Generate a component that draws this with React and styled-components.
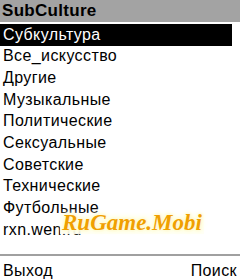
import styled, { createGlobalStyle } from "styled-components";

const GlobalStyle = createGlobalStyle`
  html, body {
    margin: 0;
    padding: 0;
    background: #fff;
  }
  body {
    font-family: "Liberation Sans", Arial, sans-serif;
  }
`;

const Screen = styled.div`
  width: 240px;
  height: 280px;
  display: flex;
  flex-direction: column;
  background: #fff;
  overflow: hidden;
`;

const TitleBar = styled.div`
  height: 22px;
  flex-shrink: 0;
  background: #a3a3a3;
  display: flex;
  align-items: center;
  padding-left: 2px;
  font-weight: bold;
  font-size: 17px;
  letter-spacing: 0.3px;
  color: #000;
`;

const List = styled.div`
  margin-top: 2px;
  flex: 1;
  display: flex;
  flex-direction: column;
  position: relative;
`;

const Row = styled.div`
  height: 21.67px;
  flex-shrink: 0;
  display: flex;
  align-items: center;
  padding-left: 3px;
  width: 229px;
  font-size: 16px;
  letter-spacing: 0.4px;
  color: ${(p) => (p.$active ? "#fff" : "#000")};
  background: ${(p) => (p.$active ? "#000" : "transparent")};
  white-space: nowrap;
`;

/* watermark sits over the last rows */
const Watermark = styled.div`
  position: absolute;
  left: 60px;
  top: 188px;
  font-family: "Liberation Serif", "Times New Roman", serif;
  font-style: italic;
  font-weight: bold;
  font-size: 23px;
  line-height: 22px;
  color: #f0a000;
  text-shadow: 0 0 2px #fff, 0 0 3px #fff6a0, 0 0 5px #fff8c0,
    0 0 8px #fffbe0, 0 0 10px #fff;
  background: linear-gradient(
    rgba(255, 255, 245, 0) 0%,
    rgba(255, 255, 245, 0.9) 35%,
    rgba(255, 255, 245, 0.9) 100%
  );
  padding: 0 2px;
`;

const SoftBar = styled.div`
  height: 26px;
  flex-shrink: 0;
  box-sizing: border-box;
  border-top: 2px solid #a0a0a0;
  display: flex;
  justify-content: space-between;
  align-items: center;
  padding: 5px 3px 0;
  font-size: 16px;
  letter-spacing: 0.4px;
  color: #000;
`;

const items = [
  "Субкультура",
  "Все_искусство",
  "Другие",
  "Музыкальные",
  "Политические",
  "Сексуальные",
  "Советские",
  "Технические",
  "Футбольные",
  "rxn.wen.ru",
];

export default function App() {
  return (
    <Screen>
      <GlobalStyle />
      <TitleBar>SubCulture</TitleBar>
      <List>
        {items.map((t, i) => (
          <Row key={t} $active={i === 0}>
            {t}
          </Row>
        ))}
        <Watermark>RuGame.Mobi</Watermark>
      </List>
      <SoftBar>
        <span>Выход</span>
        <span>Поиск</span>
      </SoftBar>
    </Screen>
  );
}
